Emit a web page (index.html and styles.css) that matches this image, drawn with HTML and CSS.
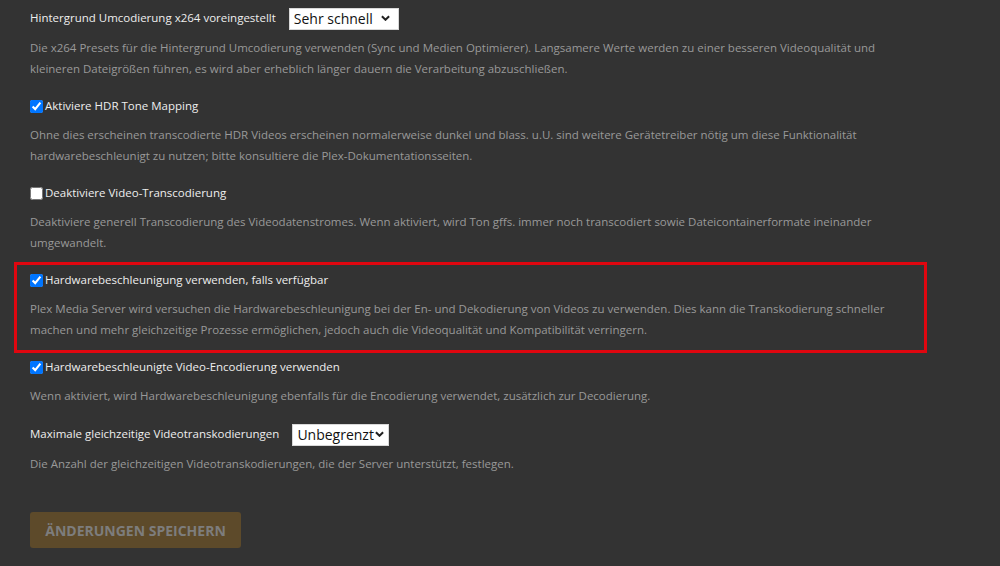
FILE: index.html
```html
<!DOCTYPE html>
<html lang="de">
<head>
<meta charset="utf-8">
<title>Transcoder</title>
<link rel="stylesheet" href="styles.css">
</head>
<body>
<form class="settings">
  <div class="setting">
    <div class="row">
      <label class="label" for="preset">Hintergrund Umcodierung x264 voreingestellt</label>
      <span class="select-wrap select-preset">
        <select id="preset" class="select">
          <option>Sehr schnell</option>
        </select>
        <svg class="chevron" viewBox="0 0 10 6" width="9" height="6"><path d="M1 1l4 4 4-4" fill="none" stroke="#222" stroke-width="2.2"/></svg>
      </span>
    </div>
    <p class="desc">Die x264 Presets für die Hintergrund Umcodierung verwenden (Sync und Medien Optimierer). Langsamere Werte werden zu einer besseren Videoqualität und<br>kleineren Dateigrößen führen, es wird aber erheblich länger dauern die Verarbeitung abzuschließen.</p>
  </div>

  <div class="setting">
    <label class="row check"><input type="checkbox" checked><span class="label">Aktiviere HDR Tone Mapping</span></label>
    <p class="desc">Ohne dies erscheinen transcodierte HDR Videos erscheinen normalerweise dunkel und blass. u.U. sind weitere Gerätetreiber nötig um diese Funktionalität<br>hardwarebeschleunigt zu nutzen; bitte konsultiere die Plex-Dokumentationsseiten.</p>
  </div>

  <div class="setting">
    <label class="row check"><input type="checkbox"><span class="label">Deaktiviere Video-Transcodierung</span></label>
    <p class="desc">Deaktiviere generell Transcodierung des Videodatenstromes. Wenn aktiviert, wird Ton gffs. immer noch transcodiert sowie Dateicontainerformate ineinander<br>umgewandelt.</p>
  </div>

  <div class="setting marked">
    <label class="row check"><input type="checkbox" checked><span class="label">Hardwarebeschleunigung verwenden, falls verfügbar</span></label>
    <p class="desc">Plex Media Server wird versuchen die Hardwarebeschleunigung bei der En- und Dekodierung von Videos zu verwenden. Dies kann die Transkodierung schneller<br>machen und mehr gleichzeitige Prozesse ermöglichen, jedoch auch die Videoqualität und Kompatibilität verringern.</p>
  </div>

  <div class="setting">
    <label class="row check"><input type="checkbox" checked><span class="label">Hardwarebeschleunigte Video-Encodierung verwenden</span></label>
    <p class="desc">Wenn aktiviert, wird Hardwarebeschleunigung ebenfalls für die Encodierung verwendet, zusätzlich zur Decodierung.</p>
  </div>

  <div class="setting">
    <div class="row">
      <label class="label" for="limit">Maximale gleichzeitige Videotranskodierungen</label>
      <span class="select-wrap select-limit">
        <select id="limit" class="select">
          <option>Unbegrenzt</option>
        </select>
        <svg class="chevron" viewBox="0 0 10 6" width="9" height="6"><path d="M1 1l4 4 4-4" fill="none" stroke="#222" stroke-width="2.2"/></svg>
      </span>
    </div>
    <p class="desc">Die Anzahl der gleichzeitigen Videotranskodierungen, die der Server unterstützt, festlegen.</p>
  </div>

  <button type="button" class="save" disabled>Änderungen speichern</button>
</form>
</body>
</html>
```

FILE: styles.css
```css
html, body {
  margin: 0;
  background: #333333;
  font-family: "Open Sans", "Liberation Sans", sans-serif;
}

.settings {
  width: 880px;
  padding: 7px 0 0 30px;
}

.setting {
  position: relative;
  margin-bottom: 17px;
}

/* red frame around the highlighted setting */
.setting.marked::before {
  content: "";
  position: absolute;
  top: -8px;
  bottom: -13px;
  left: -16px;
  right: -17px;
  border: 3px solid #e0060f;
  pointer-events: none;
}

.row {
  display: flex;
  align-items: center;
  min-height: 20px;
}

.label {
  color: #eeeeee;
  font-size: 11.5px;
  line-height: 20px;
}

.check input {
  width: 13px;
  height: 13px;
  margin: 0 2px 0 0;
}

.desc {
  margin: 8px 0 0;
  color: #999999;
  font-size: 11.5px;
  line-height: 21px;
}

.select-wrap {
  position: relative;
  display: inline-block;
  margin-left: 13px;
  height: 22px;
}

.select {
  appearance: none;
  -webkit-appearance: none;
  height: 22px;
  padding: 0 0 0 4px;
  border: 1px solid #d8d8d8;
  border-radius: 0;
  background: #ffffff;
  color: #111111;
  font-family: "Open Sans", "Liberation Sans", sans-serif;
  font-size: 14px;
  line-height: 20px;
}

.select-preset .select { width: 110px; }
.select-limit .select { width: 97px; }

.chevron {
  position: absolute;
  top: 8px;
  right: 9px;
  pointer-events: none;
}

.select-limit .chevron { right: 5px; }

.save {
  margin-top: 21px;
  width: 211px;
  height: 36px;
  border: 0;
  border-radius: 3px;
  background: #5d4a2a;
  color: #7d7d7d;
  font-family: "Open Sans", "Liberation Sans", sans-serif;
  font-size: 14px;
  font-weight: 700;
  text-transform: uppercase;
  letter-spacing: 0;
}
```
